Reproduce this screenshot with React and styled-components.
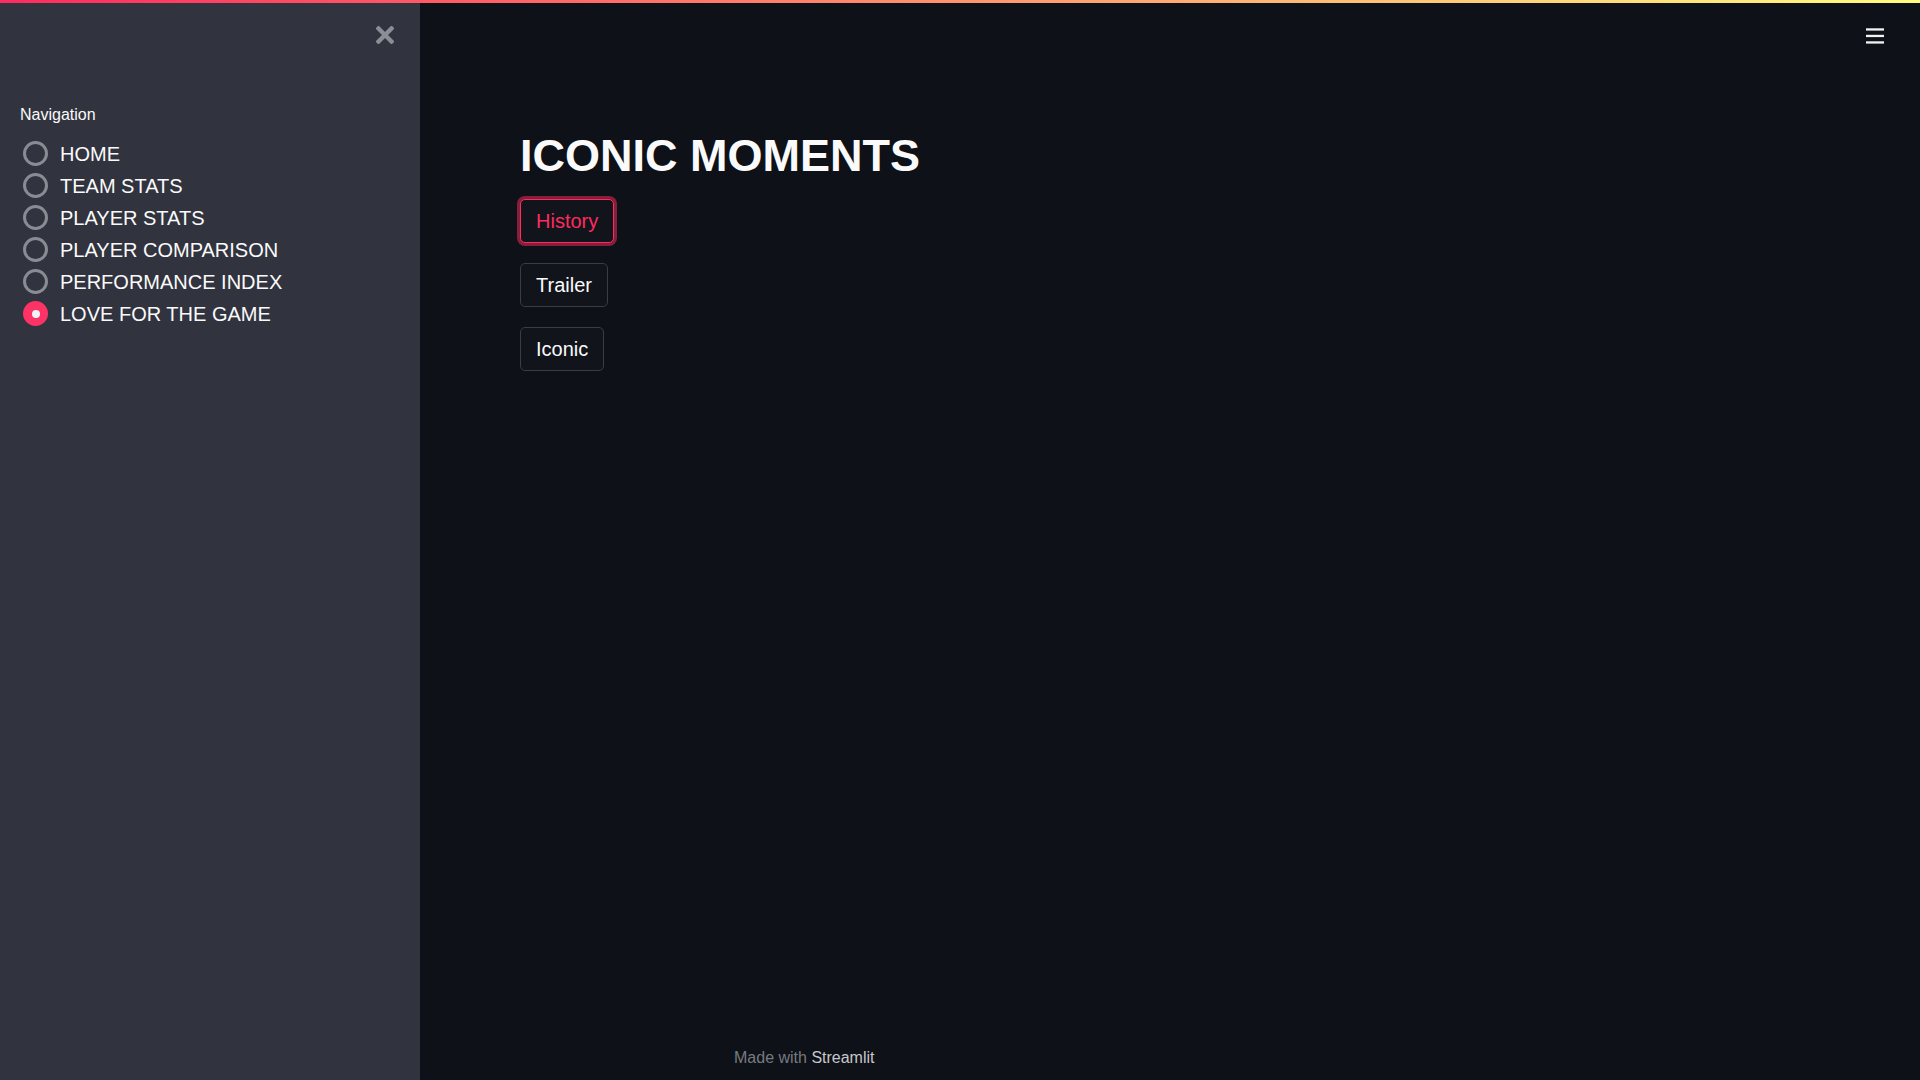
import React, { useState } from "react"
import styled, { createGlobalStyle } from "styled-components"

const pages = [
    "HOME",
    "TEAM STATS",
    "PLAYER STATS",
    "PLAYER COMPARISON",
    "PERFORMANCE INDEX",
    "LOVE FOR THE GAME",
]

const moments = ["History", "Trailer", "Iconic"]

const App = () => {
    const [page, setPage] = useState("LOVE FOR THE GAME")
    const [focused, setFocused] = useState("History")

    return (
        <>
            <GlobalStyle />
            <Decoration />
            <Layout>
                <Sidebar>
                    <SidebarHeader>
                        <CloseButton aria-label="Close sidebar">
                            <svg width="18" height="18" viewBox="0 0 18 18">
                                <path d="M2.5 2.5 L15.5 15.5 M15.5 2.5 L2.5 15.5" stroke="#8c8e95" strokeWidth="4.4" strokeLinecap="square" />
                            </svg>
                        </CloseButton>
                    </SidebarHeader>
                    <NavLabel>Navigation</NavLabel>
                    <RadioGroup>
                        {pages.map(p => (
                            <RadioRow key={p} onClick={() => setPage(p)}>
                                <RadioCircle checked={page === p} />
                                <RadioText>{p}</RadioText>
                            </RadioRow>
                        ))}
                    </RadioGroup>
                </Sidebar>

                <Main>
                    <Header>
                        <MenuButton aria-label="Menu">
                            <svg width="18" height="16" viewBox="0 0 18 16">
                                <rect x="0" y="0.3" width="18" height="2.3" fill="#f2f2f2" />
                                <rect x="0" y="6.8" width="18" height="2.3" fill="#f2f2f2" />
                                <rect x="0" y="13.3" width="18" height="2.3" fill="#f2f2f2" />
                            </svg>
                        </MenuButton>
                    </Header>

                    <Content>
                        <Title>ICONIC MOMENTS</Title>
                        <ButtonColumn>
                            {moments.map(m => (
                                <Button key={m} focused={focused === m} onClick={() => setFocused(m)}>
                                    {m}
                                </Button>
                            ))}
                        </ButtonColumn>
                    </Content>

                    <Footer>
                        <FooterInner>
                            Made with <FooterLink>Streamlit</FooterLink>
                        </FooterInner>
                    </Footer>
                </Main>
            </Layout>
        </>
    )
}

const GlobalStyle = createGlobalStyle`
    html, body {
        margin: 0;
        padding: 0;
        background: #0e1117;
        color: #fafafa;
        font-family: "Liberation Sans", Arial, sans-serif;
    }
    * {
        box-sizing: border-box;
    }
`

const Decoration = styled.div`
    position: fixed;
    top: 0;
    left: 0;
    right: 0;
    height: 3px;
    z-index: 10;
    background: linear-gradient(90deg, #ff2b5e, #fffd80);
`

const Layout = styled.div`
    display: flex;
    min-height: 100vh;
`

const Sidebar = styled.aside`
    width: 420px;
    flex-shrink: 0;
    background: #31333f;
    padding: 26px 26px 0 20px;
    display: flex;
    flex-direction: column;
`

const SidebarHeader = styled.div`
    display: flex;
    justify-content: flex-end;
    height: 18px;
`

const CloseButton = styled.button`
    width: 18px;
    height: 18px;
    padding: 0;
    border: none;
    background: none;
    display: flex;
    cursor: pointer;
`

const NavLabel = styled.div`
    margin-top: 58px;
    font-size: 16px;
    line-height: 25.6px;
    color: #fafafa;
`

const RadioGroup = styled.div`
    display: flex;
    flex-direction: column;
    margin-top: 10px;
`

const RadioRow = styled.label`
    display: flex;
    align-items: center;
    height: 32px;
    cursor: pointer;
`

const RadioCircle = styled.span`
    width: 25px;
    height: 25px;
    margin-left: 3px;
    border-radius: 50%;
    flex-shrink: 0;
    display: flex;
    align-items: center;
    justify-content: center;
    border: ${p => (p.checked ? "none" : "3px solid #8a8c93")};
    background: ${p => (p.checked ? "#fd3366" : "transparent")};

    &::after {
        content: "";
        display: ${p => (p.checked ? "block" : "none")};
        width: 8px;
        height: 8px;
        border-radius: 50%;
        background: #f0f2f6;
    }
`

const RadioText = styled.span`
    margin-left: 12px;
    font-size: 20px;
    line-height: 32px;
    color: #fafafa;
`

const Main = styled.main`
    flex: 1;
    display: flex;
    flex-direction: column;
    min-height: 100vh;
`

const Header = styled.header`
    display: flex;
    justify-content: flex-end;
    padding: 28px 36px 0 0;
    height: 44px;
`

const MenuButton = styled.button`
    width: 18px;
    height: 16px;
    padding: 0;
    border: none;
    background: none;
    display: flex;
    cursor: pointer;
`

const Content = styled.section`
    flex: 1;
    padding: 85px 100px 0 100px;
`

const Title = styled.h1`
    margin: 0 0 16px;
    font-size: 45px;
    line-height: 54px;
    font-weight: 700;
    color: #fafafa;
`

const ButtonColumn = styled.div`
    display: flex;
    flex-direction: column;
    align-items: flex-start;
    gap: 20px;
`

const Button = styled.button`
    font-family: "Liberation Sans", Arial, sans-serif;
    font-size: 20px;
    line-height: 32px;
    padding: 5px 15px;
    border-radius: 5px;
    background: #11141b;
    cursor: pointer;
    border: 1px solid ${p => (p.focused ? "#ff2b5e" : "#3b3d44")};
    color: ${p => (p.focused ? "#ff2b5e" : "#fafafa")};
    box-shadow: ${p => (p.focused ? "0 0 0 3px rgba(255, 43, 94, 0.5)" : "none")};
    outline: none;
`

const Footer = styled.footer`
    display: flex;
    justify-content: center;
    padding-bottom: 9px;
`

const FooterInner = styled.div`
    width: 912px;
    padding: 0 20px;
    font-size: 16px;
    line-height: 26px;
    color: #777a7f;
`

const FooterLink = styled.span`
    color: #c6c8cb;
`

export default App
